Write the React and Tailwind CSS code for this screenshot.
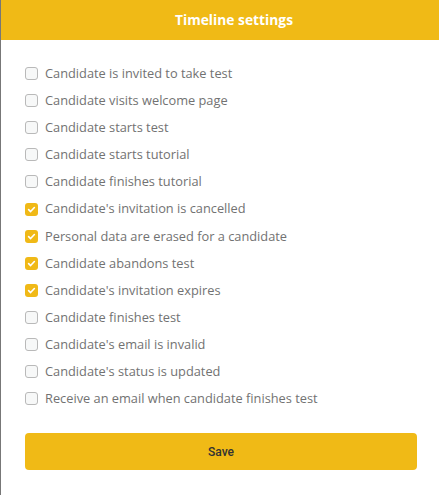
import React from "react";

const items = [
  ["Candidate is invited to take test", false],
  ["Candidate visits welcome page", false],
  ["Candidate starts test", false],
  ["Candidate starts tutorial", false],
  ["Candidate finishes tutorial", false],
  ["Candidate's invitation is cancelled", true],
  ["Personal data are erased for a candidate", true],
  ["Candidate abandons test", true],
  ["Candidate's invitation expires", true],
  ["Candidate finishes test", false],
  ["Candidate's email is invalid", false],
  ["Candidate's status is updated", false],
  ["Receive an email when candidate finishes test", false],
];

function Box({ checked }) {
  if (checked) {
    return (
      <span className="flex h-[13px] w-[13px] shrink-0 items-center justify-center rounded-[3px] bg-[#f0b917]">
        <svg width="9" height="9" viewBox="0 0 10 10" fill="none">
          <path d="M1.8 5.2 L4 7.3 L8.2 2.8" stroke="white" strokeWidth="1.8" strokeLinecap="round" strokeLinejoin="round" />
        </svg>
      </span>
    );
  }
  return <span className="h-[13px] w-[13px] shrink-0 rounded-[3px] border border-[#b9b9b9] bg-[#f7f8f8]" />;
}

export default function App() {
  return (
    <div className="h-[495px] w-[439px] overflow-hidden border-l border-[#777] bg-white" style={{ fontFamily: "'Open Sans', sans-serif" }}>
      <div className="flex h-[40px] items-center justify-center bg-[#f0ba16] pl-[28px] text-[13.8px] font-bold text-white">
        Timeline settings
      </div>
      <div className="flex flex-col pl-[24px] pt-[20px]">
        {items.map(([label, checked]) => (
          <div key={label} className="flex h-[27.1px] items-center gap-[7px]">
            <Box checked={checked} />
            <span className="text-[12.8px] text-[#727272]">{label}</span>
          </div>
        ))}
      </div>
      <div className="pl-[24px] pr-[22px] pt-[21px]">
        <button className="flex h-[37px] w-full items-center justify-center rounded-[4px] bg-[#f0ba16] text-[12px] font-medium text-[#333]" style={{ fontFamily: "Roboto, sans-serif" }}>
          Save
        </button>
      </div>
    </div>
  );
}
